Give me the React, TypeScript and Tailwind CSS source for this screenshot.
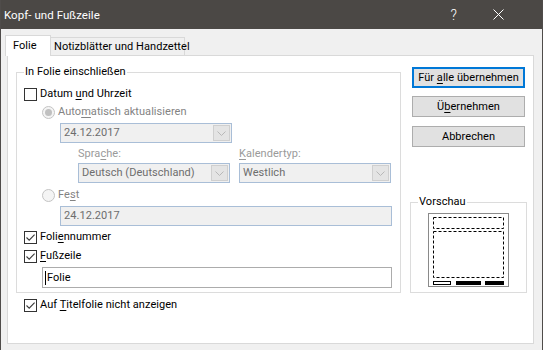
import React from 'react';

function Check({ checked }: { checked?: boolean }) {
  return (
    <span className="w-[13px] h-[13px] border border-[#333333] bg-white flex items-center justify-center shrink-0">
      {checked && (
        <svg width="11" height="11" viewBox="0 0 11 11">
          <path d="M1.5 5.5 L4.2 8.2 L9.6 2.6" fill="none" stroke="#3a3a3a" strokeWidth="1.1" />
        </svg>
      )}
    </span>
  );
}

function Radio({ selected }: { selected?: boolean }) {
  return (
    <span className="w-[13px] h-[13px] rounded-full border border-[#c4c4c4] bg-[#f4f4f4] flex items-center justify-center shrink-0">
      {selected && <span className="w-[7px] h-[7px] rounded-full bg-[#c0c0c0]" />}
    </span>
  );
}

function Chevron() {
  return (
    <svg width="9" height="5" viewBox="0 0 9 5">
      <path d="M0.5 0.5 L4.5 4.5 L8.5 0.5" fill="none" stroke="#b8b8b8" strokeWidth="1" />
    </svg>
  );
}

function Combo({ value, className }: { value: string; className: string }) {
  return (
    <div className={`h-[20px] border border-[#a9bed7] bg-[#f0f0f0] flex items-stretch p-[1px] ${className}`}>
      <span className="flex-1 pl-[2px] flex items-center text-[#6d6d6d] whitespace-nowrap">{value}</span>
      <span className="w-[17px] border border-[#cfcfcf] bg-[#e4e4e4] flex items-center justify-center">
        <Chevron />
      </span>
    </div>
  );
}

function Button({ children, isDefault }: { children: React.ReactNode; isDefault?: boolean }) {
  return (
    <button
      className={`ml-[2px] w-[113px] h-[21px] bg-[#e1e1e1] text-black flex items-center justify-center whitespace-nowrap ${
        isDefault ? 'border-2 border-[#0078d7]' : 'border border-[#adadad]'
      }`}
    >
      <span>{children}</span>
    </button>
  );
}

export default function App() {
  return (
    <div className="w-[543px] h-[350px] bg-[#f0f0f0] border-l border-r border-[#4f4c4a] overflow-hidden font-[Roboto,'Noto_Sans',sans-serif] text-[11px] tracking-[0.05px] leading-[16px] text-black whitespace-nowrap">
      {/* Title bar */}
      <div className="h-[29px] bg-[#4b4845] flex items-center text-white">
        <span className="pl-[3px] text-[11.5px]">Kopf- und Fußzeile</span>
        <span className="ml-auto text-[14px] font-light mr-[36px]">?</span>
        <span className="mr-[38px] flex items-center">
          <svg width="11" height="11" viewBox="0 0 11 11">
            <path d="M0.5 0.5 L10.5 10.5 M10.5 0.5 L0.5 10.5" stroke="white" strokeWidth="1" />
          </svg>
        </span>
      </div>

      {/* Tabs */}
      <div className="pt-[6px] pl-[4px]">
        <div className="flex items-end h-[20px]">
          <div className="relative z-10 -mb-px h-[21px] w-[46px] border-l border-t border-r border-[#d9d9d9] bg-white pl-[7px] pt-[2px]">
            Folie
          </div>
          <div className="h-[18px] w-[134px] border-t border-r border-[#d9d9d9] bg-[#f0f0f0] pl-[3px] pt-[1px]">
            Notizblätter und Handzettel
          </div>
        </div>

        {/* Panel */}
        <div className="ml-[2px] w-[527px] h-[289px] border border-[#d9d9d9] bg-white flex">
          {/* Left column */}
          <div className="ml-[8px] w-[385px] flex flex-col">
            <div className="relative mt-[16px] h-[221px] border border-[#dcdcdc] flex flex-col">
              <span className="absolute left-[7px] -top-[9px] px-[1px] bg-white">In Folie einschließen</span>

              <div className="mt-[12px] h-[18px] pl-[7px] flex items-center gap-[3px]">
                <Check />
                <span>
                  Datum <u className="underline-offset-2">u</u>nd Uhrzeit
                </span>
              </div>

              <div className="h-[18px] pl-[25px] flex items-center gap-[3px] text-[#838383]">
                <Radio selected />
                <span>
                  Auto<u className="underline-offset-2">m</u>atisch aktualisieren
                </span>
              </div>

              <Combo value="24.12.2017" className="mt-[2px] ml-[43px] w-[172px]" />

              <div className="mt-[2px] h-[17px] ml-[61px] flex items-center text-[#9a9a9a]">
                <span className="w-[161px]">
                  Spra<u className="underline-offset-2">c</u>he:
                </span>
                <span>
                  <u className="underline-offset-2">K</u>alendertyp:
                </span>
              </div>

              <div className="mt-[1px] ml-[61px] flex gap-[9px]">
                <Combo value="Deutsch (Deutschland)" className="w-[152px]" />
                <Combo value="Westlich" className="w-[152px]" />
              </div>

              <div className="mt-[3px] h-[18px] pl-[25px] flex items-center gap-[3px] text-[#838383]">
                <Radio />
                <span>
                  Fe<u className="underline-offset-2">s</u>t
                </span>
              </div>

              <div className="mt-[2px] ml-[43px] w-[332px] h-[20px] border border-[#a9bed7] bg-[#f0f0f0] pl-[3px] flex items-center text-[#6d6d6d]">
                24.12.2017
              </div>

              <div className="mt-[2px] h-[18px] pl-[7px] flex items-center gap-[3px]">
                <Check checked />
                <span>
                  Foli<u className="underline-offset-2">e</u>nnummer
                </span>
              </div>

              <div className="mt-[1px] h-[18px] pl-[7px] flex items-center gap-[3px]">
                <Check checked />
                <span>
                  <u className="underline-offset-2">F</u>ußzeile
                </span>
              </div>

              <div className="mt-[2px] ml-[25px] w-[350px] h-[21px] border border-[#acacac] bg-white pl-[2px] flex items-center">
                <span className="w-px h-[14px] bg-black mr-[1px]" />
                <span>Folie</span>
              </div>
            </div>

            <div className="mt-[3px] h-[18px] pl-[8px] flex items-center gap-[3px]">
              <Check checked />
              <span>
                Auf <u className="underline-offset-2">T</u>itelfolie nicht anzeigen
              </span>
            </div>
          </div>

          {/* Right column */}
          <div className="ml-[9px] w-[117px] flex flex-col">
            <div className="mt-[11px]">
              <Button isDefault>
                Für <u className="underline-offset-2">a</u>lle übernehmen
              </Button>
            </div>
            <div className="mt-[8px]">
              <Button>
                Ü<u className="underline-offset-2">b</u>ernehmen
              </Button>
            </div>
            <div className="mt-[9px]">
              <Button>Abbrechen</Button>
            </div>

            <div className="relative mt-[55px] h-[91px] border border-[#dcdcdc] flex justify-center pt-[10px]">
              <span className="absolute left-[7px] -top-[9px] px-[1px] bg-white">Vorschau</span>
              <svg width="81" height="74" viewBox="0 0 81 74">
                <rect x="0.5" y="0.5" width="80" height="73" fill="white" stroke="#8a8a8a" />
                <rect x="5.5" y="4.5" width="70" height="11" fill="none" stroke="black" strokeDasharray="3 2" />
                <rect x="5.5" y="18.5" width="70" height="46" fill="none" stroke="black" strokeDasharray="3 2" />
                <rect x="5.5" y="68.5" width="17" height="3" fill="white" stroke="black" />
                <rect x="28" y="68" width="25" height="4" fill="black" />
                <rect x="57" y="68" width="19" height="4" fill="black" />
              </svg>
            </div>
          </div>
        </div>
      </div>
    </div>
  );
}
